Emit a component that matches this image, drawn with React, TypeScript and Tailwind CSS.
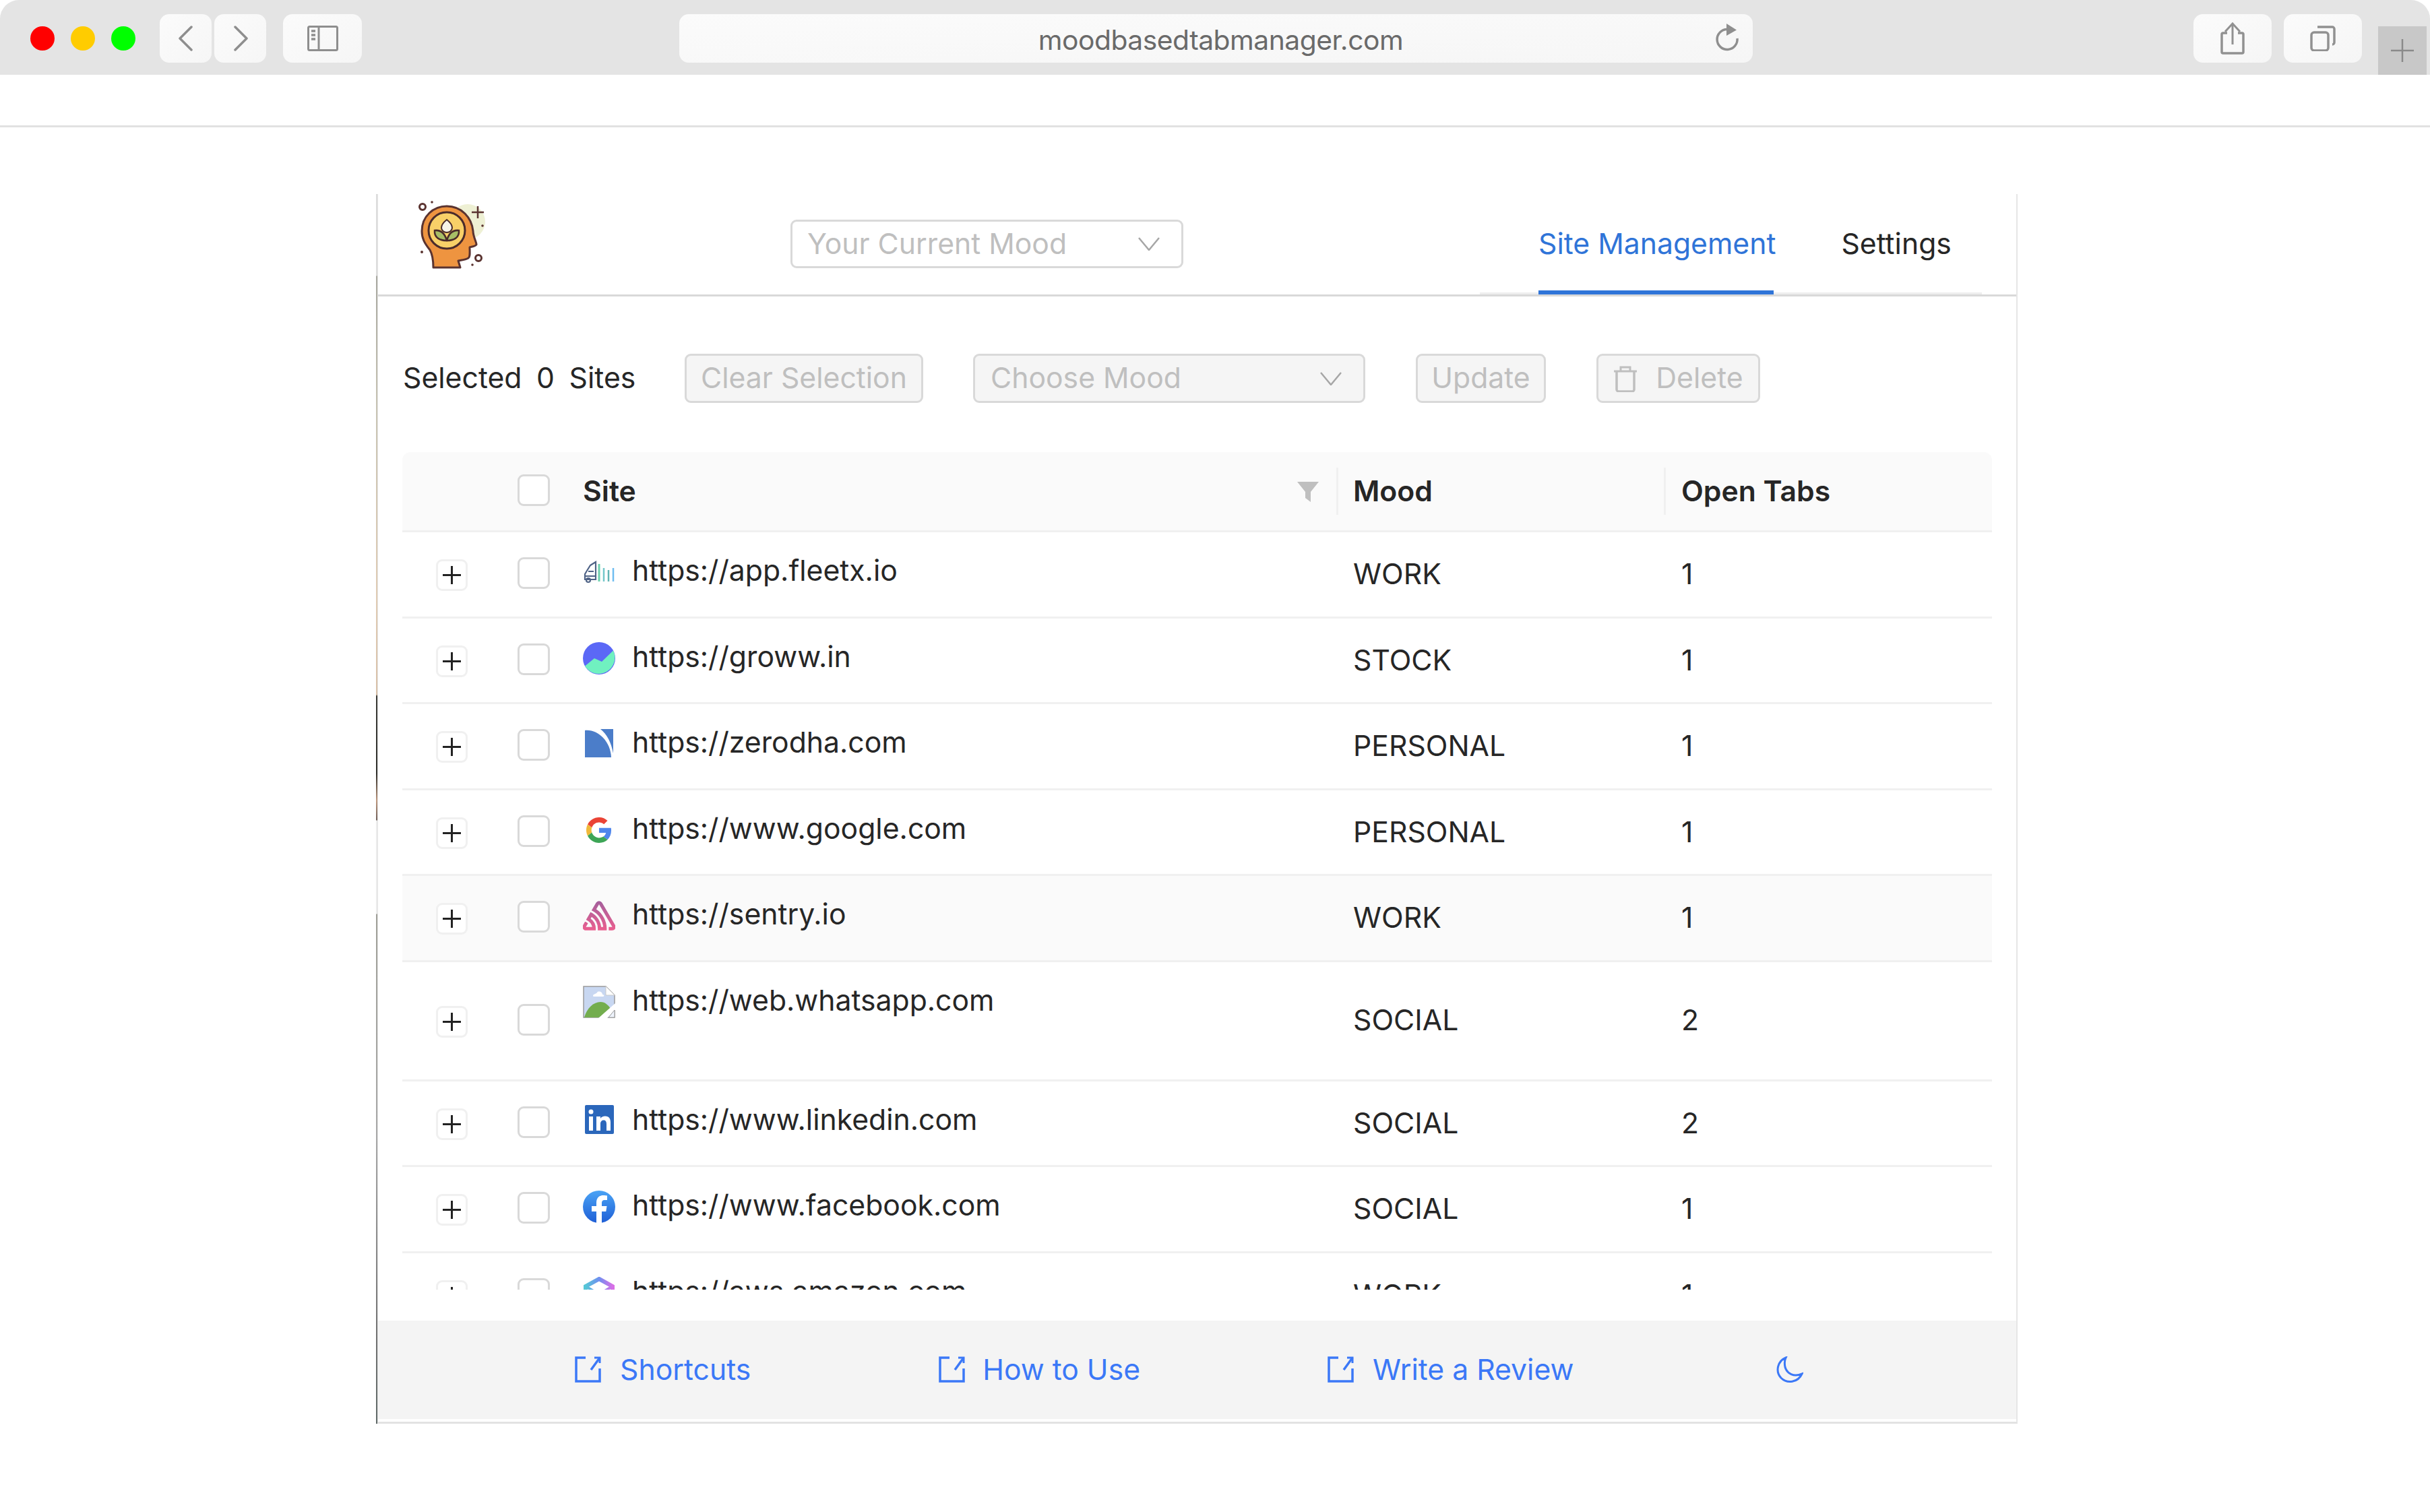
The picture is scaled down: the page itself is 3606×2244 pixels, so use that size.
import React from "react";
import { SiSentry } from "react-icons/si";

const rows = [
  { url: "https://app.fleetx.io", mood: "WORK", tabs: "1", icon: "fleetx" },
  { url: "https://groww.in", mood: "STOCK", tabs: "1", icon: "groww" },
  { url: "https://zerodha.com", mood: "PERSONAL", tabs: "1", icon: "zerodha" },
  { url: "https://www.google.com", mood: "PERSONAL", tabs: "1", icon: "google" },
  { url: "https://sentry.io", mood: "WORK", tabs: "1", icon: "sentry", hover: true },
  { url: "https://web.whatsapp.com", mood: "SOCIAL", tabs: "2", icon: "broken", tall: true },
  { url: "https://www.linkedin.com", mood: "SOCIAL", tabs: "2", icon: "linkedin" },
  { url: "https://www.facebook.com", mood: "SOCIAL", tabs: "1", icon: "facebook" },
  { url: "https://aws.amazon.com", mood: "WORK", tabs: "1", icon: "aws" },
];

function Favicon({ name }: { name: string }) {
  const c = "block w-[48px] h-[48px] shrink-0";
  switch (name) {
    case "fleetx":
      return (
        <svg className={c} viewBox="0 0 48 48" fill="none">
          <path d="M11 14l8-5v26H3v-8l3-5z M8 23h8 M3 30h16" stroke="#4f6386" strokeWidth="2.200" />
          <circle cx="8" cy="36" r="3" stroke="#4f6386" strokeWidth="2.200" />
          <path d="M24 12v26" stroke="#6fd0ae" strokeWidth="3" />
          <path d="M31 18v20" stroke="#73c7c9" strokeWidth="2.5" />
          <path d="M38 21v17" stroke="#62b5b5" strokeWidth="2.5" />
          <path d="M45 18v20" stroke="#6fbdf0" strokeWidth="2.5" />
        </svg>
      );
    case "groww":
      return (
        <svg className={c} viewBox="0 0 48 48">
          <circle cx="24" cy="24" r="24" fill="#5b68f6" />
          <path d="M3 35.600L17 24l11 5L45 12.500A24 24 0 0 1 3 35.600z" fill="#70f1c0" />
        </svg>
      );
    case "zerodha":
      return (
        <svg className={c} viewBox="0 0 48 48">
          <path d="M3 4c19-2 38 16 39 40H3z" fill="#4b7dc9" />
          <path d="M26 2h19v36C42 22 36 10 26 2z" fill="#4b7dc9" />
        </svg>
      );
    case "google":
      return (
        <svg className={c} viewBox="0 0 48 48">
          <g transform="translate(5 5) scale(0.79)">
            <path fill="#ea4335" d="M24 9.5c3.5 0 6.6 1.2 9.1 3.6l6.8-6.8C35.8 2.5 30.4 0 24 0 14.6 0 6.5 5.4 2.6 13.2l7.9 6.2C12.4 13.7 17.7 9.5 24 9.5z" />
            <path fill="#4f86ec" d="M46.9 24.5c0-1.6-.1-3.1-.4-4.5H24v9h12.9c-.6 3-2.2 5.5-4.8 7.2l7.7 6c4.5-4.2 7.1-10.3 7.1-17.7z" />
            <path fill="#f0b93a" d="M10.5 28.6c-.5-1.4-.8-3-.8-4.6s.3-3.2.8-4.6l-7.9-6.2C.9 16.5 0 20.1 0 24s.9 7.5 2.6 10.8z" />
            <path fill="#3da556" d="M24 48c6.5 0 11.9-2.1 15.9-5.8l-7.7-6c-2.1 1.4-4.9 2.3-8.2 2.3-6.3 0-11.6-4.2-13.5-9.9l-7.9 6.2C6.5 42.6 14.6 48 24 48z" />
          </g>
        </svg>
      );
    case "sentry":
      return (
        <span className="block w-[48px] h-[48px] shrink-0 overflow-hidden">
          <svg className="block w-0 h-0">
            <defs>
              <linearGradient id="sentryG" x1="0" y1="0" x2="0" y2="1">
                <stop offset="0" stopColor="#a45f9c" />
                <stop offset="1" stopColor="#ea5f8f" />
              </linearGradient>
            </defs>
          </svg>
          <SiSentry size={48} fill="url(#sentryG)" stroke="url(#sentryG)" strokeWidth={0.7} className="block" />
        </span>
      );
    case "broken":
      return (
        <svg className={c} viewBox="0 0 48 48">
          <path d="M1 1h33l13 13v33H1z" fill="#c8d7f1" stroke="#9a9a9a" strokeWidth="1.5" />
          <path d="M34 1v13h13z" fill="#fff" stroke="#c9c9c9" strokeWidth="1" />
          <path d="M2 47c4-14 14-23 24-23 7 0 12 5 15 10l-10 13z" fill="#73ad4e" />
          <path d="M15 15c0-3 5-3 6-5 2-3 8-1 8 3 3 0 3 3 1 3H16c-1 0-1-1-1-1z" fill="#fff" />
          <path d="M23 48l25-22v10L36 48z" fill="#fff" />
          <path d="M47 36v11h-9z" fill="#eef3fc" stroke="#9a9a9a" strokeWidth="1" />
        </svg>
      );
    case "linkedin":
      return (
        <svg className={c} viewBox="0 0 48 48">
          <rect x="3" y="0" width="43" height="43" rx="2" fill="#2b67bb" />
          <rect x="9" y="17" width="6" height="21" fill="#fff" />
          <circle cx="12" cy="10" r="3.500" fill="#fff" />
          <path d="M20 17h6v3c1-2 4-3.500 7-3.500 6 0 8 4 8 9V38h-6V28c0-3-1-5.500-4-5.500s-5 2-5 5.500v10h-6z" fill="#fff" />
        </svg>
      );
    case "facebook":
      return (
        <svg className={c} viewBox="0 0 48 48">
          <defs>
            <linearGradient id="fbG" x1="0" y1="0" x2="0" y2="1">
              <stop offset="0" stopColor="#4aa3f5" />
              <stop offset="1" stopColor="#1f5fd6" />
            </linearGradient>
          </defs>
          <circle cx="24" cy="24" r="24" fill="url(#fbG)" />
          <path d="M20 48V31h-7v-8h7v-5c0-7 4-11 10-11 3 0 6 .5 6 .5v6.500h-3.500c-3.500 0-4.500 2-4.500 4.500V23h7.500l-1.200 8H28v17z" fill="#fff" />
        </svg>
      );
    default:
      return (
        <svg className={c} viewBox="0 0 48 48" fill="none">
          <defs>
            <linearGradient id="awsG" x1="0" y1="0" x2="1" y2="0">
              <stop offset="0" stopColor="#56c7d6" />
              <stop offset="0.5" stopColor="#6f8ff0" />
              <stop offset="1" stopColor="#d86fe6" />
            </linearGradient>
          </defs>
          <path d="M24 3L44 14v20L24 46 4 34V14z" stroke="url(#awsG)" strokeWidth="6" />
          <path d="M4 14l20 12 20-12" stroke="url(#awsG)" strokeWidth="4" />
        </svg>
      );
  }
}

function ExportIcon() {
  return (
    <svg className="block w-[39px] h-[39px] shrink-0" viewBox="0 0 39 39" fill="none" stroke="#3b78f7" strokeWidth="3.5">
      <path d="M16 2H2v35h35V18" />
      <path d="M24 20L37 2" />
      <path d="M29 2h8v8" strokeWidth="3" />
    </svg>
  );
}

function Chrome() {
  const btn = "h-[72px] rounded-[14px] bg-gradient-to-br from-[#fbfbfb] to-[#f6f6f6] flex items-center justify-center";
  return (
    <div className="h-[111px] bg-[#e4e4e4] rounded-t-[28px] flex items-start pt-[21px] relative">
      <div className="flex gap-[24px] pl-[45px] pt-[18px]">
        <span className="block w-[36px] h-[36px] rounded-full bg-[#ff0000]" />
        <span className="block w-[36px] h-[36px] rounded-full bg-[#ffcc00]" />
        <span className="block w-[36px] h-[36px] rounded-full bg-[#00ff00]" />
      </div>
      <div className={`${btn} w-[77px] ml-[36px]`}>
        <svg width="24" height="38" viewBox="0 0 24 38" fill="none" stroke="#8e8e8e" strokeWidth="3.5" strokeLinecap="round" strokeLinejoin="round">
          <path d="M20 2L3 19l17 17" />
        </svg>
      </div>
      <div className={`${btn} w-[77px] ml-[4px]`}>
        <svg width="24" height="38" viewBox="0 0 24 38" fill="none" stroke="#8e8e8e" strokeWidth="3.5" strokeLinecap="round" strokeLinejoin="round">
          <path d="M4 2l17 17L4 36" />
        </svg>
      </div>
      <div className={`${btn} w-[117px] ml-[25px]`}>
        <svg width="46" height="38" viewBox="0 0 46 38" fill="none" stroke="#8e8e8e" strokeWidth="3">
          <rect x="1.500" y="1.500" width="43" height="35" rx="2" />
          <path d="M17 2v34" />
          <path d="M6 8h6M6 14h6M6 20h6" strokeWidth="3.500" />
        </svg>
      </div>
      <div className="w-[1593px] ml-[471px] h-[72px] rounded-[14px] bg-gradient-to-br from-[#fbfbfb] to-[#f6f6f6] flex items-center justify-center relative">
        <span className="text-[40.8px] leading-[72px] text-[#6a6a6a] tracking-[-0.5px] font-['Inter',sans-serif] ml-[14px] pt-[3px]">moodbasedtabmanager.com</span>
        <svg className="absolute right-[19px] top-[11px]" width="40" height="44" viewBox="0 0 40 44" fill="none" stroke="#8f8f8f" strokeWidth="3.500">
          <path d="M36 25A15 15 0 1 1 21 11.500" />
          <path d="M20 3l15 9.500L20 21z" fill="#8f8f8f" stroke="none" />
        </svg>
      </div>
      <div className={`${btn} w-[116px] ml-[654px]`}>
        <svg width="36" height="48" viewBox="0 0 36 48" fill="none" stroke="#919191" strokeWidth="3">
          <path d="M10 16H4a2 2 0 0 0-2 2v26a2 2 0 0 0 2 2h28a2 2 0 0 0 2-2V18a2 2 0 0 0-2-2h-6" strokeWidth="3.500" />
          <path d="M18 33V2" />
          <path d="M7 14L18 2l11 12" />
        </svg>
      </div>
      <div className={`${btn} w-[116px] ml-[18px]`}>
        <svg width="38" height="38" viewBox="0 0 38 38" fill="none" stroke="#919191" strokeWidth="3.500">
          <rect x="2" y="10" width="25" height="27" rx="4" />
          <path d="M11 2h22a3 3 0 0 1 3 3v20a3 3 0 0 1-3 3" />
        </svg>
      </div>
      <div className="w-[72px] h-[72px] bg-[#c8c8c8] ml-[24px] mt-[18px] flex items-center justify-center">
        <svg width="34" height="34" viewBox="0 0 34 34" stroke="#8a8a8a" strokeWidth="2.500">
          <path d="M17 0v34M0 17h34" />
        </svg>
      </div>
    </div>
  );
}

function Row({ r }: { r: (typeof rows)[number] }) {
  return (
    <div
      className={`grid grid-cols-[171px_96px_1119px_486px_487px] border-b-[3px] border-[#f0f0f0] items-center ${
        r.tall ? "h-[177px]" : "h-[127.5px]"
      } ${r.hover ? "bg-[#fafafa]" : ""}`}
    >
      <div className="pl-[50px] pt-[3px]">
        <div className="w-[47px] h-[47px] rounded-[9px] border-[3px] border-[#f0f0f0] bg-white flex items-center justify-center">
          <svg width="27" height="27" viewBox="0 0 27 27" stroke="#222" strokeWidth="3">
            <path d="M13.500 0v27M0 13.500h27" />
          </svg>
        </div>
      </div>
      <div className="pb-[3px]">
        <div className="w-[48px] h-[47px] rounded-[9px] border-[3px] border-[#d9d9d9] bg-white" />
      </div>
      <div className="self-start pt-[35px] flex items-center gap-[25px] pl-[1px] h-[83px]">
        <Favicon name={r.icon} />
        <span className="whitespace-nowrap mt-[-3px]">{r.url}</span>
      </div>
      <div className="pl-[25px]">{r.mood}</div>
      <div className="pl-[26px]">{r.tabs}</div>
    </div>
  );
}

function Hdr({ children, cls }: { children: React.ReactNode; cls: string }) {
  return <div className={cls}>{children}</div>;
}

export default function App() {
  const disabledBtn =
    "h-[73px] rounded-[9px] border-[3px] border-[#d9d9d9] bg-[#f5f5f5] text-[#bfbfbf] flex items-center";
  return (
    <div className="w-[3606px] h-[2244px] bg-white font-['Inter',sans-serif] text-[42.7px] text-[#262626] overflow-hidden">
      <Chrome />
      <div className="h-[78px] border-b-[3px] border-[#e2e2e2]" />
      <div className="ml-[558px] mt-[99px] w-[2436px] h-[1825px] flex">
        <div className="w-[2px] h-full shrink-0 bg-[linear-gradient(to_bottom,#dcdcdc_0px,#dcdcdc_121px,#a8a8a0_122px,#c8c4b4_320px,#e0ccb4_600px,#d8c0a8_743px,#3a3a36_745px,#2e2e2a_860px,#c09a80_900px,#70605a_929px,#ececec_930px,#ececec_1068px,#a0a098_1069px,#a8a8a8_1400px,#707070_1700px,#606a68_1825px)]" />
        <div className="w-[2434px] h-full border-l-[1px] border-r-[2px] border-b-[3px] border-l-[#e4e4e4] border-r-[#e6e6e6] border-b-[#e2e2e2] flex flex-col">
          {/* header */}
          <div className="h-[152px] border-b-[3px] border-[#d9d9d9] flex shrink-0">
            <svg className="ml-[57px] mt-[8px] shrink-0" width="104" height="106" viewBox="0 0 104 106">
              <circle cx="76" cy="33" r="26" fill="#eef0d4" />
              <path d="M25 101C25 90 24 82 20 75 12 65 8 58 8 47 8 25 25 10 45 10c22 0 37 17 39 37 0 8 5 16 5 20-2 3-7 3-10 4 0 7 1 14-2 16-5 3-11 3-15 4l3 10z" fill="#ee9440" stroke="#5a3330" strokeWidth="3" strokeLinejoin="round" />
              <circle cx="45" cy="46" r="27" fill="#f8d068" stroke="#4a2b2b" strokeWidth="3" />
              <path d="M45 30c-5 4-8 9-8 12 0 4 4 7 8 7s8-3 8-7c0-3-3-8-8-12z" fill="#f6f3e8" stroke="#4a2b2b" strokeWidth="2" />
              <path d="M27 46c9-1 15 4 18 15-10 0-19-4-18-15z" fill="#a7bd66" stroke="#4a2b2b" strokeWidth="2.500" />
              <path d="M63 46c-9-1-15 4-18 15 10 0 19-4 18-15z" fill="#a7bd66" stroke="#4a2b2b" strokeWidth="2.500" />
              <circle cx="9" cy="11" r="4.500" fill="none" stroke="#5a3330" strokeWidth="3" />
              <circle cx="23" cy="4" r="1.800" fill="#5a3330" />
              <path d="M91 10v18M82 19h18" stroke="#5a3330" strokeWidth="2.500" />
              <circle cx="98" cy="39" r="1.800" fill="#5a3330" />
              <circle cx="8" cy="78" r="2" fill="#5a3330" />
              <circle cx="92" cy="87" r="4.500" fill="none" stroke="#5a3330" strokeWidth="3" />
              <circle cx="83" cy="97" r="1.800" fill="#5a3330" />
            </svg>
            <div className="ml-[451px] mt-[38px] w-[583px] h-[72px] rounded-[9px] border-[3px] border-[#d9d9d9] bg-white text-[#bfbfbf] flex items-center justify-between pl-[22px] pr-[32px] shrink-0">
              <span className="whitespace-nowrap">Your Current Mood</span>
              <svg width="32" height="20" viewBox="0 0 32 20" fill="none" stroke="#a6a6a6" strokeWidth="2.500">
                <path d="M1 1l15 18L31 1" />
              </svg>
            </div>
            <div className="ml-[440px] w-[745px] h-[149px] relative flex items-center border-b-[3px] border-[#eeeeee] pl-[87px] pt-[3px] gap-[97px] shrink-0">
              <span className="text-[#2f74d8] whitespace-nowrap">Site Management</span>
              <span className="whitespace-nowrap">Settings</span>
              <span className="absolute left-[87px] bottom-[-3px] w-[349px] h-[6px] bg-[#2f74d8]" />
            </div>
          </div>
          {/* toolbar */}
          <div className="h-[231px] flex items-center pl-[37px] shrink-0 pt-[12px]">
            <span className="whitespace-pre w-[418px] [word-spacing:-1.2px]">Selected  0  Sites</span>
            <div className={`${disabledBtn} w-[354px] justify-center`}>Clear Selection</div>
            <div className={`${disabledBtn} w-[582px] ml-[74px] justify-between pl-[23px] pr-[32px]`}>
              <span>Choose Mood</span>
              <svg width="32" height="20" viewBox="0 0 32 20" fill="none" stroke="#a6a6a6" strokeWidth="2.500">
                <path d="M1 1l15 18L31 1" />
              </svg>
            </div>
            <div className={`${disabledBtn} w-[193px] ml-[75px] justify-center`}>Update</div>
            <div className={`${disabledBtn} w-[243px] ml-[75px] justify-center gap-[27px]`}>
              <svg width="36" height="40" viewBox="0 0 36 40" fill="none" stroke="#bfbfbf" strokeWidth="3">
                <path d="M1 9h34M11 9V3h14v6" />
                <path d="M5 9v27a3 3 0 0 0 3 3h20a3 3 0 0 0 3-3V9" strokeWidth="3.500" />
              </svg>
              <span>Delete</span>
            </div>
          </div>
          {/* table */}
          <div className="ml-[36px] w-[2359px] shrink-0">
            <div className="h-[119px] rounded-t-[12px] bg-[#fafafa] border-b-[3px] border-[#f0f0f0] grid grid-cols-[171px_96px_1119px_486px_487px] items-center font-semibold">
              <div />
              <div className="pb-[3px]">
                <div className="w-[48px] h-[47px] rounded-[9px] border-[3px] border-[#d9d9d9] bg-white" />
              </div>
              <Hdr cls="h-[70px] flex items-center justify-between pl-[1px] pr-[26px]">
                <span>Site</span>
                <svg width="32" height="32" viewBox="0 0 32 32" fill="#bfbfbf">
                  <path d="M0 2h32L20 17v15l-8-6v-9z" />
                </svg>
              </Hdr>
              <Hdr cls="h-[70px] flex items-center pl-[22px] border-l-[3px] border-[#f0f0f0]">Mood</Hdr>
              <Hdr cls="h-[70px] flex items-center pl-[23px] border-l-[3px] border-[#f0f0f0]">Open Tabs</Hdr>
            </div>
            <div className="h-[1124px] overflow-hidden">
              {rows.map((r) => (
                <Row key={r.url} r={r} />
              ))}
            </div>
          </div>
          <div className="h-[46px] shrink-0" />
          {/* footer */}
          <div className="h-[146px] bg-[#f4f4f4] flex items-center pl-[292px] text-[#3b78f7] shrink-0">
            <div className="flex items-center gap-[28px] whitespace-nowrap"><ExportIcon />Shortcuts</div>
            <div className="flex items-center gap-[26px] whitespace-nowrap ml-[279px]"><ExportIcon />How to Use</div>
            <div className="flex items-center gap-[28px] whitespace-nowrap ml-[278px]"><ExportIcon />Write a Review</div>
            <svg className="ml-[301px]" width="40" height="40" viewBox="0 0 40 40" fill="none" stroke="#3b78f7" strokeWidth="3">
              <path d="M14 2C2 7-2 22 7 32c9 9 25 7 31-6-12 5-22 0-25-10-1-5-1-10 1-14z" />
            </svg>
          </div>
        </div>
      </div>
    </div>
  );
}
